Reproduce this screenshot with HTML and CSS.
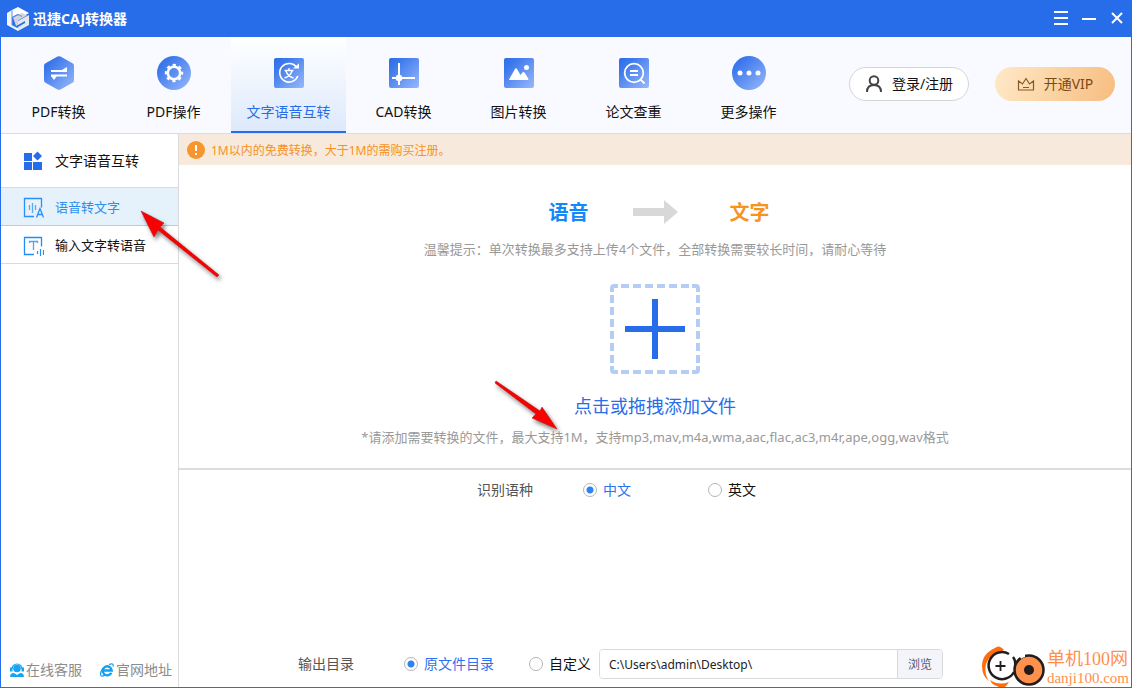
FILE: index.html
```html
<!DOCTYPE html>
<html lang="zh-CN">
<head>
<meta charset="utf-8">
<meta name="viewport" content="width=device-width, initial-scale=1">
<title>迅捷CAJ转换器</title>
<link rel="stylesheet" href="styles.css">
</head>
<body>
<svg class="defs" width="0" height="0" aria-hidden="true">
  <defs>
    <linearGradient id="blue" x1="0" y1="0" x2="1" y2="1">
      <stop offset="0" stop-color="#2b6ce9"/><stop offset=".25" stop-color="#3f7aec"/><stop offset="1" stop-color="#98b9fb"/>
    </linearGradient>
    <filter id="shade" x="-20%" y="-20%" width="150%" height="150%">
      <feDropShadow dx="2" dy="3" stdDeviation="2" flood-color="#000" flood-opacity=".5"/>
    </filter>
  </defs>
</svg>
<div class="window">
  <header class="titlebar">
    <svg width="22" height="24" viewBox="0 0 22 24" aria-hidden="true">
      <path d="M0 6 5 3v15l6 3v3L0 18z" fill="#f4f6fa"/>
      <path d="M5 3 11 0l11 6-6 3.500L11 7 5 10z" fill="#fff"/>
      <path d="M6 10.500 15 6l5 2.500-9 5V18l-2 1z" fill="#cfd4de"/>
      <path d="M22 8v10l-11 6v-4l7-4v-2l-7 4v-4z" fill="#e4e8ef"/>
      <path d="M5 3.500V18l5 2.500M6 10l5-2.500 4 2" fill="none" stroke="#5d8eea" stroke-width="1"/>
    </svg>
    <h1 class="app-name">迅捷CAJ转换器</h1>
    <div class="window-actions">
      <button type="button" aria-label="菜单"><svg width="16" height="16" viewBox="0 0 16 16"><path d="M1 1h14M1 7h14M1 13h14" stroke="#fff" stroke-width="2"/></svg></button>
      <button type="button" aria-label="最小化"><svg width="16" height="16" viewBox="0 0 16 16"><path d="M1 8h14" stroke="#fff" stroke-width="2"/></svg></button>
      <button type="button" aria-label="关闭"><svg width="16" height="16" viewBox="0 0 16 16"><path d="m3 2 10 10M13 2 3 12" stroke="#fff" stroke-width="2"/></svg></button>
    </div>
  </header>

  <div class="toolbar">
    <nav class="tabs">
      <a class="tab" href="#pdf">
        <svg width="36" height="36" viewBox="0 0 36 36"><path d="M16.500 1.600q1.500-.8 3 0l12 6.600q1.500.8 1.500 2.500v14.600q0 1.700-1.500 2.500l-12 6.600q-1.500.8-3 0l-12-6.600Q3 27 3 25.300V10.700q0-1.700 1.500-2.500z" fill="url(#blue)"/><path d="M10 16h16M10 20.500h16" stroke="#fff" stroke-width="2"/><path d="M20 15.500 26 12v4zM16 21l-6 0 3 4z" fill="#fff"/></svg>
        <span>PDF转换</span>
      </a>
      <a class="tab" href="#ops">
        <svg width="36" height="36" viewBox="0 0 36 36"><circle cx="18" cy="18" r="17" fill="url(#blue)"/><circle cx="18" cy="18" r="6.200" fill="none" stroke="#fff" stroke-width="2.600"/><circle cx="18" cy="18" r="8" fill="none" stroke="#fff" stroke-width="2.400" stroke-dasharray="3.140 3.140" stroke-dashoffset="1.570"/></svg>
        <span>PDF操作</span>
      </a>
      <a class="tab active" href="#speech" aria-current="page">
        <svg width="36" height="36" viewBox="0 0 36 36"><rect x="3" y="3" width="30" height="30" rx="2" fill="url(#blue)"/><path d="M25.500 12.200A9.300 9.300 0 1 0 26.800 21" fill="none" stroke="#fff" stroke-width="1.600"/><path d="M22 13.500h6V8.500z" fill="#fff"/><path d="M13.500 15.500h9M18 13v2.500M21 16q-1.500 5-7.500 7M15 16q1.500 5 7.500 7" fill="none" stroke="#fff" stroke-width="1.400"/></svg>
        <span>文字语音互转</span>
      </a>
      <a class="tab" href="#cad">
        <svg width="36" height="36" viewBox="0 0 36 36"><rect x="3" y="3" width="30" height="30" rx="2" fill="url(#blue)"/><path d="M13 8v22M6 23h23" stroke="#fff" stroke-width="2"/><circle cx="13" cy="23" r="3.300" fill="#fff"/></svg>
        <span>CAD转换</span>
      </a>
      <a class="tab" href="#image">
        <svg width="36" height="36" viewBox="0 0 36 36"><rect x="3" y="3" width="30" height="30" rx="2" fill="url(#blue)"/><path d="M8 24.500 14 14q1-1.500 2 0l3.500 6 2-2.500q1-1 2 0l4 6.500-.5 1H8.500z" fill="#fff"/><circle cx="25.500" cy="12.500" r="2.500" fill="#fff"/></svg>
        <span>图片转换</span>
      </a>
      <a class="tab" href="#check">
        <svg width="36" height="36" viewBox="0 0 36 36"><rect x="3" y="3" width="30" height="30" rx="2" fill="url(#blue)"/><circle cx="18" cy="18" r="9.300" fill="none" stroke="#fff" stroke-width="1.800"/><path d="M14 16h8M14 20h8M24.500 24.500l4 4" stroke="#fff" stroke-width="1.800"/></svg>
        <span>论文查重</span>
      </a>
      <a class="tab" href="#more">
        <svg width="36" height="36" viewBox="0 0 36 36"><circle cx="18" cy="18" r="17" fill="url(#blue)"/><g fill="#fff"><circle cx="9" cy="18" r="2.500"/><circle cx="18" cy="18" r="2.500"/><circle cx="27" cy="18" r="2.500"/></g></svg>
        <span>更多操作</span>
      </a>
    </nav>
    <div class="account">
      <button class="pill login" type="button">
        <svg width="18" height="18" viewBox="0 0 18 18" fill="none" stroke="#444" stroke-width="2"><circle cx="9" cy="5.500" r="4.300"/><path d="M2 17q0-7 7-7t7 7"/></svg>
        登录/注册
      </button>
      <button class="pill vip" type="button">
        <svg width="18" height="18" viewBox="0 0 18 18" fill="none" stroke="#8a5a24" stroke-width="1.200"><path d="M1.500 15V6l4 3L9 3.500 12.500 9l4-3v9zM6 12.500h6"/></svg>
        开通VIP
      </button>
    </div>
  </div>

  <div class="body">
    <aside class="sidebar">
      <h2 class="side-title">
        <svg width="22" height="22" viewBox="0 0 22 22"><g fill="#276ce8"><path d="M2 3h8v8H2zM2 12h8v8H2zM11 12h9v8h-9zM15.500 1.500l4.500 4.500-4.500 4.500L11 6z"/></g></svg>
        文字语音互转
      </h2>
      <a class="side-item active" href="#to-text" aria-current="page">
        <svg width="22" height="22" viewBox="0 0 22 22" fill="none" stroke="#2d8ff0"><path d="M12 20.500H2.500v-18h17v9" stroke-width="1.300"/><path d="M7.500 9v5M10.500 7v10M13.500 9v5" stroke-width="1.300" opacity=".75"/><path d="m14.500 21.500 3.500-9 3.500 9M16 18.500h4" stroke-width="1.300"/></svg>
        语音转文字
      </a>
      <a class="side-item" href="#to-speech">
        <svg width="22" height="22" viewBox="0 0 22 22" fill="none" stroke="#1f8ff5"><path d="M12 20.500H2.500v-17h17v9" stroke-width="1.300"/><path d="M7.500 9V7.500h8V9M11.500 8v8" stroke-width="1.300" opacity=".8"/><path d="M15.500 17v3M18.500 15v7M21.500 16v5" stroke-width="1.200"/></svg>
        输入文字转语音
      </a>
      <div class="side-footer">
        <a href="#service">
          <svg width="14" height="14" viewBox="0 0 14 14"><circle cx="7" cy="5.500" r="3.800" fill="#18a3f3"/><path d="M2 6a5 5 0 0 1 10 0" fill="none" stroke="#18a3f3" stroke-width="1.200"/><path d="M0 4.500h2.500v4H0zM11.500 4.500H14v4h-2.500zM0 14q0-4 4-4l3 2 3-2q4 0 4 4z" fill="#18a3f3"/></svg>
          在线客服
        </a>
        <a href="#site">
          <svg width="14" height="14" viewBox="0 0 14 14" fill="none" stroke="#139ff0"><path d="M11.300 9.700A4.500 4.500 0 1 1 11.700 7.500H4" stroke-width="2.400"/><path d="M9 1.500q5-2 4 2M3 5Q-.5 10 1 12.800q1.500 1 4-.8" stroke-width="1.200"/></svg>
          官网地址
        </a>
      </div>
    </aside>

    <main class="main">
      <p class="notice">
        <svg width="18" height="18" viewBox="0 0 18 18"><circle cx="9" cy="9" r="9" fill="#f6962c"/><path d="M9 4v6M9 12v2" stroke="#fff" stroke-width="2"/></svg>
        <span>1M以内的免费转换，大于1M的需购买注册。</span>
      </p>
      <section class="drop">
        <div class="direction">
          <strong class="from">语音</strong>
          <svg width="46" height="24" viewBox="0 0 46 24" aria-hidden="true"><path d="M0 8h31V0l14 12-14 12v-8H0z" fill="#d8d8d8"/></svg>
          <strong class="to">文字</strong>
        </div>
        <p class="tip">温馨提示：单次转换最多支持上传4个文件，全部转换需要较长时间，请耐心等待</p>
        <button class="add" type="button">
          <svg width="90" height="90" viewBox="0 0 90 90" fill="none" aria-hidden="true">
            <g stroke="#b5cdf3" stroke-width="4"><path d="M2 8V4q0-2 2-2h4M82 2h4q2 0 2 2v4M88 82v4q0 2-2 2h-4M8 88H4q-2 0-2-2v-4"/><path d="M11 2h72M11 88h72M2 11v72M88 11v72" stroke-dasharray="8 4"/></g>
            <path d="M45 15v60M15 45h60" stroke="#276ce8" stroke-width="6"/>
          </svg>
          <span>点击或拖拽添加文件</span>
        </button>
        <p class="formats">*请添加需要转换的文件，最大支持1M，支持mp3,mav,m4a,wma,aac,flac,ac3,m4r,ape,ogg,wav格式</p>
      </section>
      <div class="options language" role="radiogroup" aria-labelledby="lang-label">
        <span class="caption" id="lang-label">识别语种</span>
        <label class="choice"><input type="radio" name="lang" checked><span>中文</span></label>
        <label class="choice"><input type="radio" name="lang"><span>英文</span></label>
      </div>
      <div class="options output" role="radiogroup" aria-labelledby="out-label">
        <span class="caption" id="out-label">输出目录</span>
        <label class="choice"><input type="radio" name="out" checked><span>原文件目录</span></label>
        <label class="choice"><input type="radio" name="out"><span>自定义</span></label>
        <div class="path">
          <input type="text" value="C:\Users\admin\Desktop\" aria-label="输出路径">
          <button type="button">浏览</button>
        </div>
      </div>
    </main>
  </div>

  <svg class="pointer pointer-side" width="90" height="80" viewBox="0 0 90 80" aria-hidden="true"><path d="M1 1 24 13 20 17 79 65 77 67 18 20 14 27z" fill="#fb0505" stroke="#a01010" stroke-width=".5" filter="url(#shade)"/></svg>
  <svg class="pointer pointer-drop" width="76" height="62" viewBox="0 0 76 62" aria-hidden="true"><path d="M2 1 1 3 42 34 38 38 63 49 48 27 46 31z" fill="#fb0505" stroke="#a01010" stroke-width=".5" filter="url(#shade)"/></svg>

  <div class="watermark">
    <svg width="64" height="42" viewBox="0 0 64 42" aria-hidden="true" fill="none">
      <path d="M22 4Q17-2 13 2 0 8 0 20q0 10 7 15Q2 28 4 18 8 7 20 5z" fill="#ff6c0a"/>
      <path d="M8 34q9 6 19 2l-3 4q-4 4-9 0-5-1-7-6z" fill="#ff6c0a"/>
      <path d="M27 8A13.500 13.500 0 1 0 32 26" stroke="#221c1d" stroke-width="2.500"/>
      <path d="M31 11q3 4 2 9" stroke="#221c1d" stroke-width="2.500"/>
      <path d="M18.500 15v10M13.500 20h10" stroke="#221c1d" stroke-width="1.800"/>
      <circle cx="47" cy="24" r="14.500" fill="#ff914d" stroke="#221c1d" stroke-width="2.500"/>
      <path d="M38 11q3-2 5-2" stroke="#fff" stroke-width="4"/>
      <circle cx="47" cy="24" r="5" fill="#221c1d"/>
    </svg>
    <div><span class="mark-name">单机100网</span><span class="mark-url">danji100.com</span></div>
  </div>
</div>
</body>
</html>
```
FILE: styles.css
```css
* { box-sizing: border-box; }
body {
  margin: 0;
  font: 14px/20px "Noto Sans", "Noto Sans CJK SC", sans-serif;
  color: #111;
}
h1, h2, p { margin: 0; }
a { color: inherit; text-decoration: none; }
button { margin: 0; padding: 0; border: 0; background: none; font: inherit; color: inherit; cursor: pointer; }
svg { display: block; flex: none; }
.defs { position: absolute; }

.window {
  position: relative;
  display: flex;
  flex-direction: column;
  min-height: 100vh;
  border: 1px solid #276ce8;
  border-top: 0;
  background: #fff;
  overflow: hidden;
}

.titlebar {
  display: flex;
  align-items: center;
  gap: 4px;
  height: 37px;
  padding: 0 6px;
  background: #276ce8;
  color: #fff;
}
.app-name { flex: 1; font-size: 14px; font-weight: 700; }
.window-actions { display: flex; gap: 12px; }

.toolbar {
  display: flex;
  justify-content: space-between;
  align-items: stretch;
  min-height: 97px;
  padding-right: 16px;
  background: #f9faff;
  border-bottom: 1px solid #d9dce4;
}
.tabs { display: flex; }
.tab {
  display: flex;
  flex-direction: column;
  align-items: center;
  gap: 11px;
  width: 115px;
  padding-top: 18px;
  border-bottom: 2px solid transparent;
}
.tab.active {
  color: #276ce8;
  background: linear-gradient(#fff, #dde9fc);
  border-bottom-color: #276ce8;
}
.account { display: flex; align-items: center; gap: 26px; padding-bottom: 2px; }
.pill {
  display: flex;
  align-items: center;
  justify-content: center;
  gap: 9px;
  width: 120px;
  height: 34px;
  border-radius: 17px;
}
.login { background: #fff; border: 1px solid #d6d6d6; }
.vip { background: linear-gradient(110deg, #ffe9c8, #f7bd80); color: #7a4a14; }

.body { display: flex; flex: 1; }
.sidebar {
  display: flex;
  flex-direction: column;
  width: 178px;
  border-right: 1px solid #d9dbde;
}
.side-title, .side-item {
  display: flex;
  align-items: center;
  gap: 11px;
  padding-left: 21px;
  border-bottom: 1px solid #d9dbde;
}
.side-title { height: 54px; font-size: 14px; font-weight: 400; }
.side-item { height: 38px; padding-top: 1px; font-size: 13px; }
.side-item.active { background: #e5f2fc; border-bottom-color: #a3d3ee; color: #2d8ff0; }
.side-footer {
  display: flex;
  justify-content: space-between;
  margin-top: auto;
  padding: 0 6px 7px 9px;
  color: #8c8c8c;
}
.side-footer a { display: flex; align-items: center; gap: 2px; }

.main { display: flex; flex-direction: column; flex: 1; min-width: 0; }
.notice {
  display: flex;
  align-items: center;
  gap: 6px;
  min-height: 31px;
  padding-left: 8px;
  background: #f7eadc;
  color: #f6921e;
  font-size: 12px;
}
.notice span { padding-top: 2px; }
.drop {
  display: flex;
  flex-direction: column;
  align-items: center;
  padding: 32px 16px 21px;
  border-bottom: 2px solid #dcdcdc;
  text-align: center;
}
.direction { display: flex; align-items: center; gap: 44px; padding-left: 8px; font-size: 20px; line-height: 28px; }
.direction strong { padding-top: 2px; }
.direction .from { color: #1089fb; }
.direction .to { color: #f7931e; padding-left: 7px; }
.tip { margin-top: 12px; font-size: 13px; color: #999; }
.add {
  display: flex;
  flex-direction: column;
  align-items: center;
  gap: 20px;
  margin-top: 25px;
  color: #276ce8;
  font-size: 18px;
  line-height: 24px;
}
.formats { margin-top: 9px; font-size: 13px; color: #999; }

.options { display: flex; align-items: center; }
.caption { margin-right: 50px; color: #555; }
.choice { display: flex; align-items: center; gap: 6px; white-space: nowrap; }
.choice input {
  appearance: none;
  width: 14px;
  height: 14px;
  margin: 0;
  border: 1px solid #b5b5b5;
  border-radius: 50%;
  background: #fff;
}
.choice input:checked { background: radial-gradient(circle, #2f82f0 3px, #fff 4px); }
.choice input:checked + span { color: #2f72ee; }
.language { padding: 10px 16px 0 298px; }
.language .choice + .choice { margin-left: 77px; }
.output { margin-top: auto; padding: 0 188px 8px 119px; }
.output .choice + .choice { margin-left: 35px; }
.path { display: flex; flex: 1; height: 30px; margin-left: 8px; border: 1px solid #d9dade; border-radius: 4px; overflow: hidden; }
.path input {
  flex: 1;
  min-width: 0;
  padding: 2px 9px 0;
  border: 0;
  font: 12px/20px "Noto Sans", sans-serif;
  color: #222;
}
.path button { width: 45px; padding-top: 2px; background: #f4f5fa; border-left: 1px solid #d9dade; font-size: 12px; color: #53587a; }

.pointer { position: absolute; overflow: visible; pointer-events: none; }
.pointer-side { left: 139px; top: 210px; }
.pointer-drop { left: 493px; top: 380px; }

.watermark {
  position: absolute;
  right: 2px;
  bottom: -1px;
  display: flex;
  align-items: center;
  gap: 1px;
  color: #ff8f4c;
  font-family: "Liberation Serif", "Noto Sans CJK SC", serif;
}
.watermark span { display: block; white-space: nowrap; }
.mark-name { font-size: 18px; line-height: 22px; }
.mark-url { font-size: 15px; line-height: 16px; }
```
